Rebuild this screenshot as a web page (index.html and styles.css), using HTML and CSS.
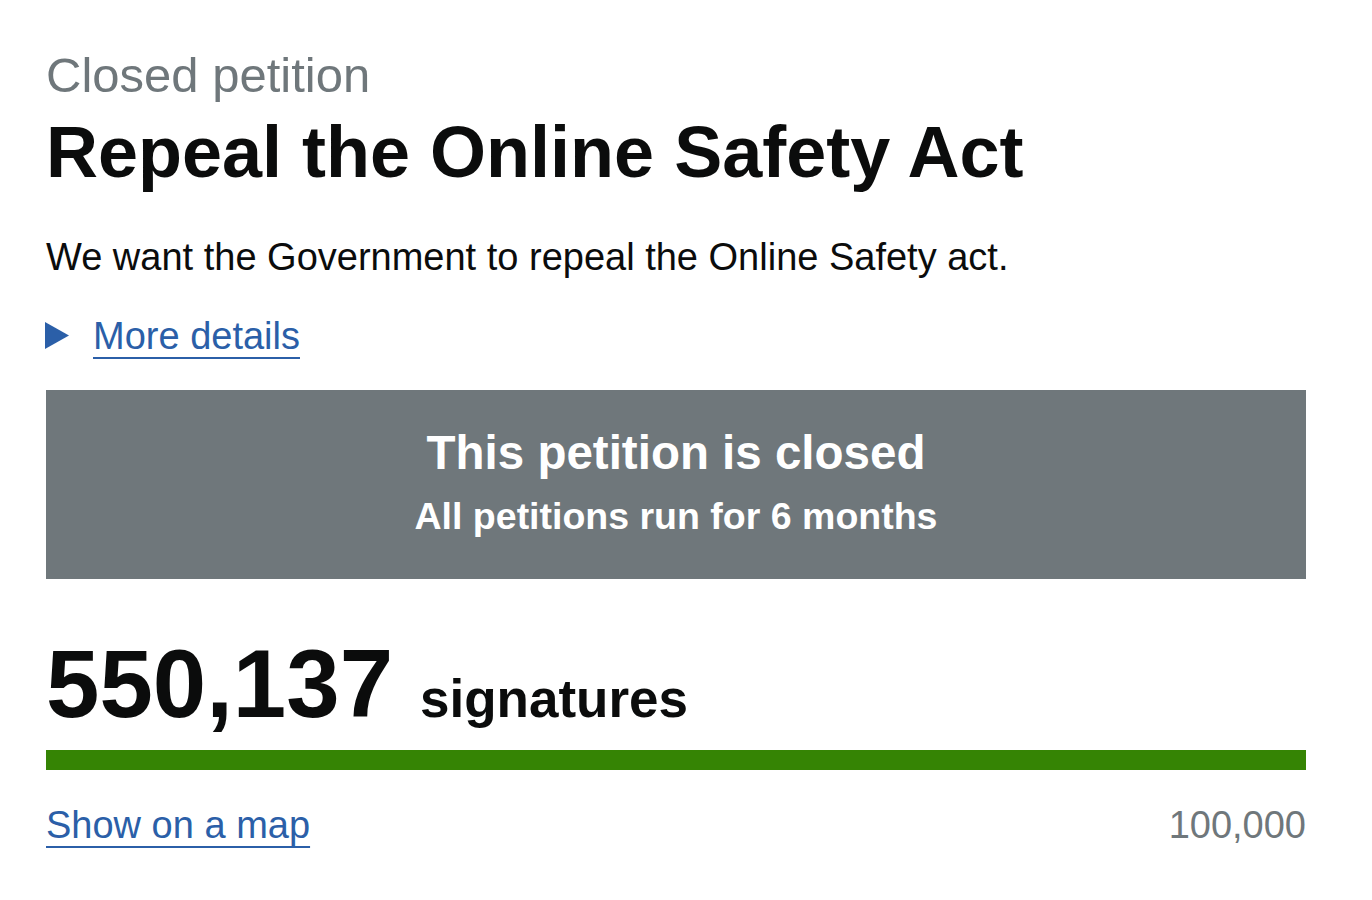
FILE: index.html
```html
<!DOCTYPE html>
<html lang="en">

<head>
    <meta charset="UTF-8">
    <meta name="viewport" content="width=device-width, initial-scale=1.0">
    <title>Repeal the Online Safety Act - Petitions</title>
    <link rel="stylesheet" href="styles.css">
</head>

<body>
    <main class="container">
        <h1 class="petition-heading">
            <span class="heading-secondary">Closed petition</span>
            <span class="heading-title">Repeal the Online Safety Act</span>
        </h1>

        <p class="action">We want the Government to repeal the Online Safety act.</p>

        <div class="details">
            <svg class="details-arrow" width="24" height="27" viewBox="0 0 24 27" aria-hidden="true">
                <polygon points="0,0 24,13.5 0,27" fill="#2b5fa8"></polygon>
            </svg>
            <a href="#" class="details-link">More details</a>
        </div>

        <div class="notice">
            <div class="notice-title">This petition is closed</div>
            <div class="notice-sub">All petitions run for 6 months</div>
        </div>

        <div class="signature-count">
            550,137<span class="signature-label">signatures</span>
        </div>

        <div class="progress">
            <div class="progress-bar" style="width: 100%"></div>
        </div>

        <div class="signature-footer">
            <a href="#" class="map-link">Show on a map</a>
            <span class="threshold">100,000</span>
        </div>
    </main>
</body>

</html>
```

FILE: styles.css
```css
body {
    font-family: 'Liberation Sans', Arial, sans-serif;
    margin: 0;
    padding: 0;
    background-color: #ffffff;
    color: #0b0c0c;
}

.container {
    padding: 47px 66px 40px 46px;
}

.petition-heading {
    margin: 0;
    font-weight: normal;
}

.heading-secondary {
    display: block;
    font-size: 49px;
    line-height: 56px;
    color: #6f777b;
}

.heading-title {
    display: block;
    margin-top: 9px;
    font-size: 72px;
    line-height: 80px;
    font-weight: bold;
    color: #0b0c0c;
}

.action {
    margin: 41px 0 0;
    font-size: 38px;
    line-height: 48px;
}

.details {
    display: flex;
    align-items: center;
    gap: 24px;
    margin-top: 31px;
    font-size: 38px;
    line-height: 48px;
}

.details-arrow {
    display: block;
    margin-left: -1px;
    margin-top: -2px;
}

a {
    color: #2b5fa8;
    text-decoration: underline;
    text-decoration-thickness: 2px;
    text-underline-offset: 0.2em;
}

.notice {
    margin-top: 30px;
    background-color: #6f777b;
    color: #ffffff;
    text-align: center;
    font-weight: bold;
    padding: 35px 0 39px;
}

.notice-title {
    font-size: 47.5px;
    line-height: 56px;
}

.notice-sub {
    margin-top: 11px;
    font-size: 37.5px;
    line-height: 48px;
}

.signature-count {
    margin-top: 55px;
    font-size: 96px;
    line-height: 100px;
    font-weight: bold;
}

.signature-label {
    margin-left: 27px;
    font-size: 53px;
    line-height: 1;
}

.progress {
    margin-top: 16px;
    height: 20px;
    background-color: #dee0e2;
}

.progress-bar {
    height: 100%;
    background-color: #358404;
}

.signature-footer {
    display: flex;
    justify-content: space-between;
    align-items: baseline;
    margin-top: 33px;
    line-height: 44px;
}

.map-link {
    font-size: 38px;
}

.threshold {
    font-size: 38px;
    color: #6f777b;
}
```
